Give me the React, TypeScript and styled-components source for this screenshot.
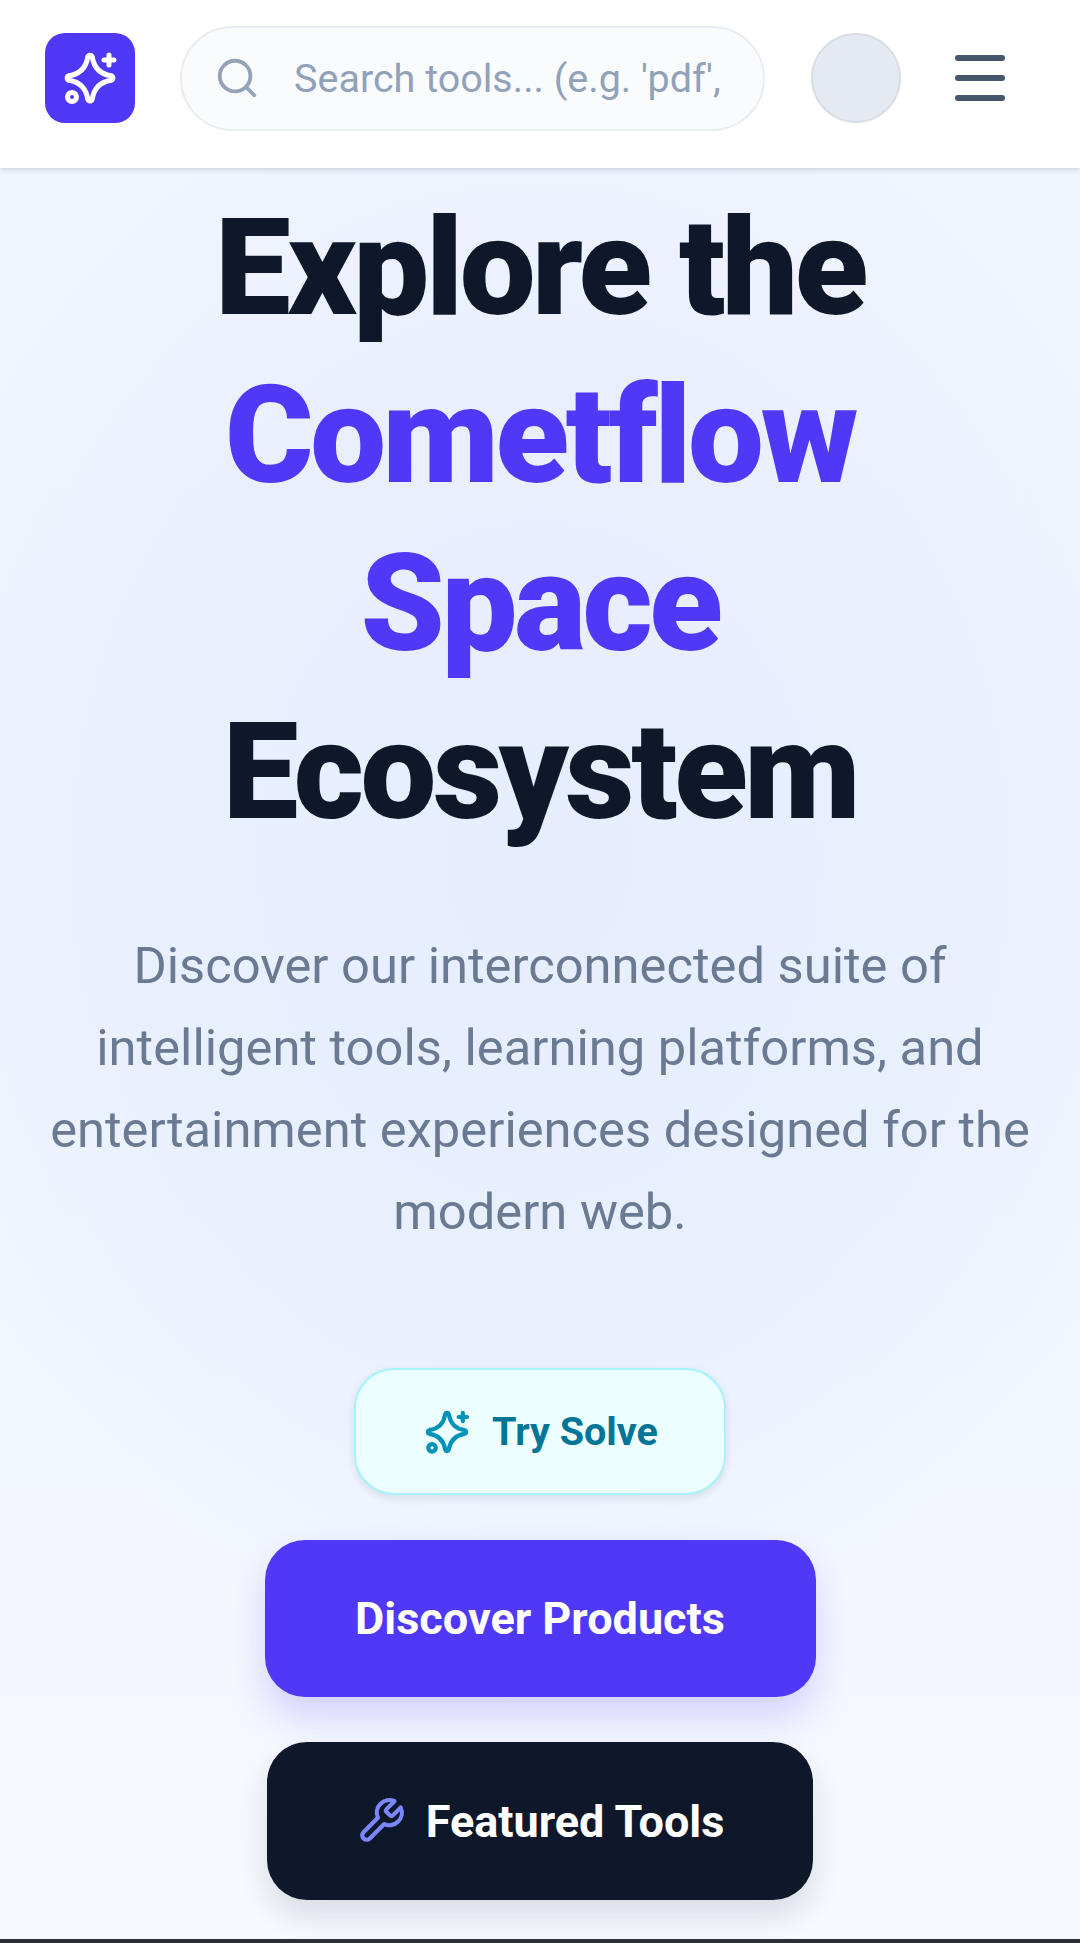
import React from 'react';
import styled, { createGlobalStyle } from 'styled-components';

const GlobalStyle = createGlobalStyle`
  html, body {
    margin: 0;
    padding: 0;
    background: #f8fafc;
  }
  * {
    box-sizing: border-box;
  }
`;

function SparkIcon({ size, color }: { size: number; color: string }) {
  return (
    <svg width={size} height={size} viewBox="0 0 24 24" fill="none" stroke={color} strokeWidth="2" strokeLinecap="round" strokeLinejoin="round">
      <path d="M11.100 3.600c.3-1 1.500-1 1.800 0C13.600 8 15.900 10.400 20.400 11.100c1 .3 1 1.500 0 1.800C15.900 13.600 13.600 16 12.900 20.400c-.3 1-1.500 1-1.800 0C10.400 16 8 13.600 3.600 12.900c-1-.3-1-1.500 0-1.800C8 10.400 10.400 8 11.100 3.600z" />
      <path d="M19.600 2.800v4M17.600 4.800h4" />
      <circle cx="4.800" cy="19.600" r="1.800" />
    </svg>
  );
}

function WrenchIcon() {
  return (
    <svg width="50" height="50" viewBox="0 0 24 24" fill="none" stroke="#7c86ff" strokeWidth="2" strokeLinecap="round" strokeLinejoin="round">
      <path d="M14.700 6.300a1 1 0 0 0 0 1.400l1.600 1.600a1 1 0 0 0 1.400 0l3.770-3.770a6 6 0 0 1-7.940 7.940l-6.910 6.910a2.120 2.120 0 0 1-3-3l6.910-6.910a6 6 0 0 1 7.940-7.940l-3.760 3.760z" />
    </svg>
  );
}

export default function App() {
  return (
    <Page>
      <GlobalStyle />
      <Header>
        <Logo>
          <SparkIcon size={60} color="#ffffff" />
        </Logo>
        <SearchBox>
          <svg width="46" height="46" viewBox="0 0 24 24" fill="none" stroke="#94a3b8" strokeWidth="2" strokeLinecap="round" strokeLinejoin="round">
            <circle cx="11" cy="11" r="8" />
            <path d="m21 21-4.300-4.300" />
          </svg>
          <SearchText>Search tools... (e.g. 'pdf',</SearchText>
        </SearchBox>
        <Avatar />
        <MenuButton>
          <MenuLine />
          <MenuLine />
          <MenuLine />
        </MenuButton>
      </Header>
      <Hero>
        <Title>
          Explore the
          <br />
          <Accent>Cometflow</Accent>
          <br />
          <Accent>Space</Accent>
          <br />
          Ecosystem
        </Title>
        <Lead>
          Discover our interconnected suite of intelligent tools, learning platforms, and entertainment experiences designed for the modern web.
        </Lead>
        <Actions>
          <SolveButton>
            <SparkIcon size={50} color="#0092b8" />
            Try Solve
          </SolveButton>
          <PrimaryButton>Discover Products</PrimaryButton>
          <DarkButton>
            <WrenchIcon />
            Featured Tools
          </DarkButton>
        </Actions>
      </Hero>
      <BottomEdge />
    </Page>
  );
}

const Page = styled.div`
  width: 1080px;
  height: 1943px;
  overflow: hidden;
  display: flex;
  flex-direction: column;
  font-family: Roboto, 'Liberation Sans', sans-serif;
  background:
    radial-gradient(ellipse 680px 820px at 540px 860px, #e6edfd 0%, #e8effd 55%, rgba(232, 239, 253, 0) 100%),
    linear-gradient(180deg, #f1f5fd 0%, #f0f5fe 50%, #f6f9fe 100%);
`;

const Header = styled.header`
  height: 168px;
  flex: none;
  background: #ffffff;
  box-shadow: 0 2px 5px rgba(15, 23, 42, 0.16);
  display: flex;
  align-items: center;
  padding: 0 45px 12px;
  gap: 45px;
  position: relative;
`;

const Logo = styled.div`
  width: 90px;
  height: 90px;
  flex: none;
  border-radius: 20px;
  background: #4f39f6;
  display: flex;
  align-items: center;
  justify-content: center;
`;

const SearchBox = styled.div`
  width: 585px;
  height: 105px;
  flex: none;
  border-radius: 53px;
  border: 2px solid #e8ecf2;
  background: #f9fbfd;
  display: flex;
  align-items: center;
  padding: 0 32px;
  gap: 34px;
`;

const SearchText = styled.span`
  font-size: 39.500px;
  color: #90a1b9;
  white-space: nowrap;
`;

const Avatar = styled.div`
  width: 90px;
  height: 90px;
  flex: none;
  border-radius: 50%;
  margin-left: 1px;
  border: 2px solid #d9dee6;
  background: #e5e9f0;
`;

const MenuButton = styled.div`
  width: 50px;
  margin-left: 9px;
  display: flex;
  flex-direction: column;
  gap: 14px;
`;

const MenuLine = styled.span`
  display: block;
  height: 6px;
  border-radius: 3px;
  background: #45556c;
`;

const Hero = styled.main`
  flex: 1;
  display: flex;
  flex-direction: column;
  align-items: center;
  padding-top: 16px;
  text-align: center;
`;

const Title = styled.h1`
  margin: 0;
  font-size: 135px;
  line-height: 168px;
  font-weight: 900;
  letter-spacing: -3.400px;
  color: #0f172a;
`;

const Accent = styled.span`
  color: #4f39f6;
`;

const Lead = styled.p`
  margin: 69px 0 0;
  width: 1000px;
  font-size: 50.700px;
  line-height: 82px;
  color: #6a7a92;
`;

const Actions = styled.div`
  margin-top: 115px;
  display: flex;
  flex-direction: column;
  align-items: center;
`;

const ActionButton = styled.div`
  display: flex;
  align-items: center;
  justify-content: center;
  border-radius: 40px;
  font-weight: 700;
  font-size: 45px;
`;

const SolveButton = styled(ActionButton)`
  width: 372px;
  height: 127px;
  font-size: 39.500px;
  gap: 20px;
  background: #ecfeff;
  border: 2px solid #a5f3fc;
  color: #007595;
  box-shadow: 0 3px 8px rgba(15, 23, 42, 0.1);
`;

const PrimaryButton = styled(ActionButton)`
  width: 551px;
  height: 157px;
  margin-top: 45px;
  background: #4f39f6;
  color: #ffffff;
  box-shadow: 0 20px 38px rgba(79, 57, 246, 0.2);
`;

const DarkButton = styled(ActionButton)`
  width: 546px;
  height: 158px;
  margin-top: 45px;
  gap: 20px;
  background: #0f172a;
  color: #ffffff;
  box-shadow: 0 16px 30px rgba(15, 23, 42, 0.12);
`;

const BottomEdge = styled.div`
  height: 4px;
  flex: none;
  background: #2b3036;
`;
